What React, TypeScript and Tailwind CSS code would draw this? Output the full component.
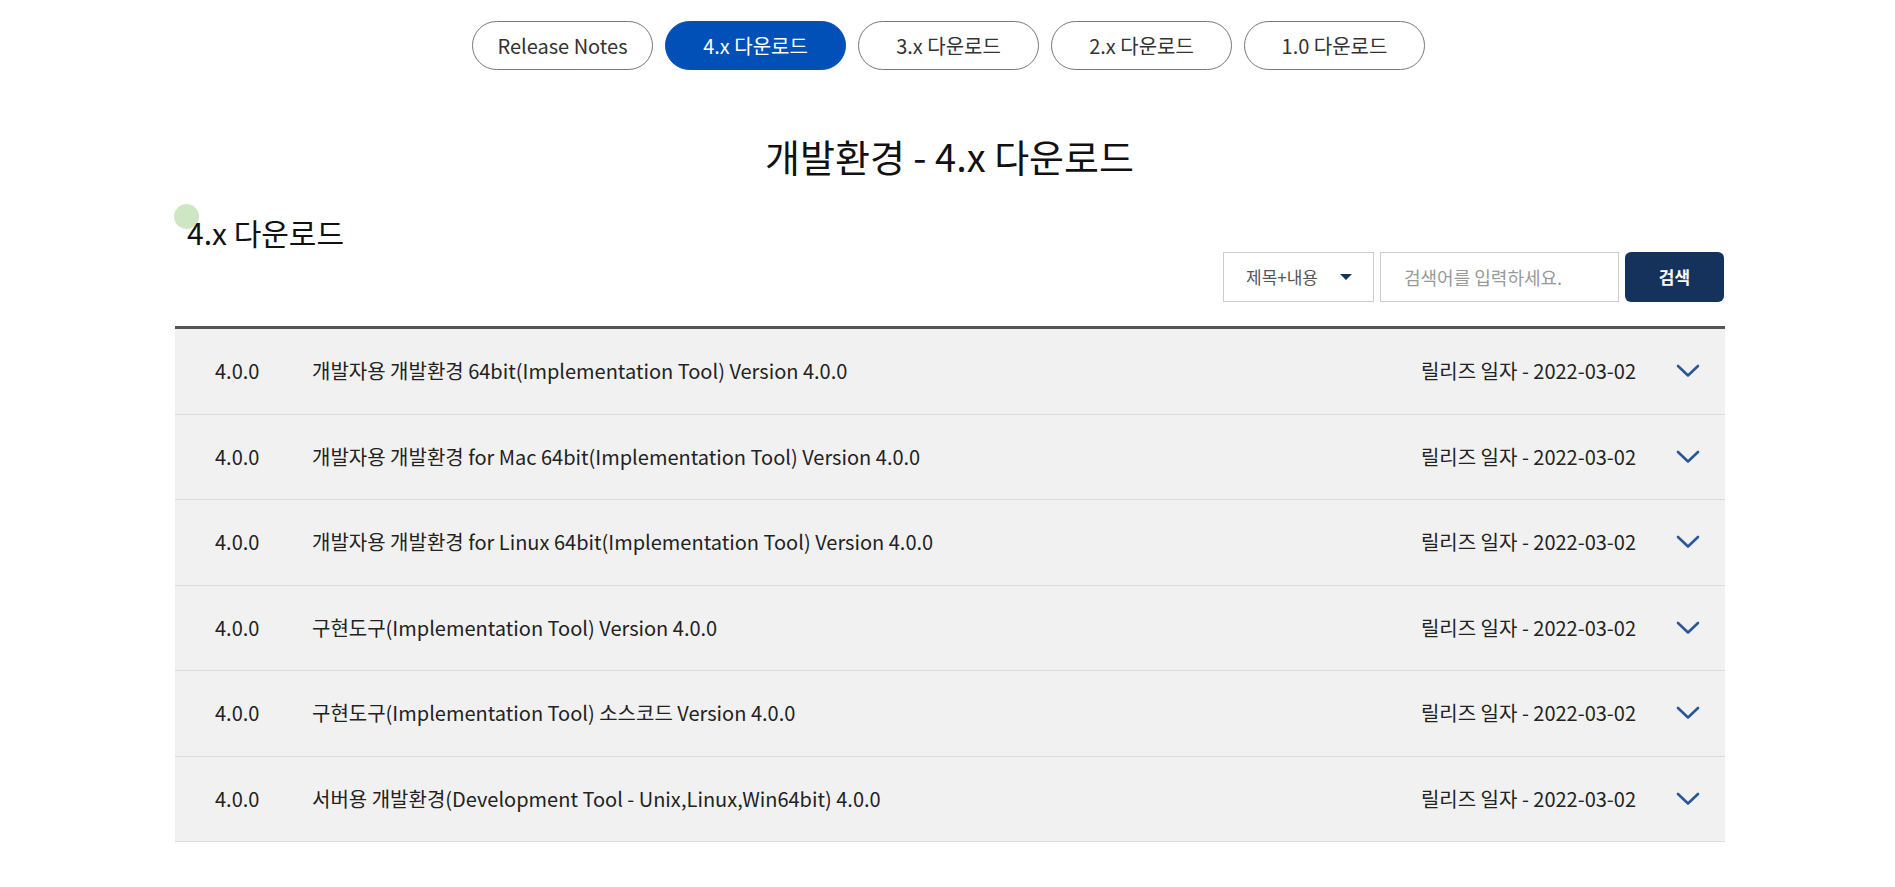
import {useState} from "react";

type Item = {
    version: string
    title: string
    date: string
}

const tabs = ["Release Notes", "4.x 다운로드", "3.x 다운로드", "2.x 다운로드", "1.0 다운로드"]

const items: Item[] = [
    {version: "4.0.0", title: "개발자용 개발환경 64bit(Implementation Tool) Version 4.0.0", date: "2022-03-02"},
    {version: "4.0.0", title: "개발자용 개발환경 for Mac 64bit(Implementation Tool) Version 4.0.0", date: "2022-03-02"},
    {version: "4.0.0", title: "개발자용 개발환경 for Linux 64bit(Implementation Tool) Version 4.0.0", date: "2022-03-02"},
    {version: "4.0.0", title: "구현도구(Implementation Tool) Version 4.0.0", date: "2022-03-02"},
    {version: "4.0.0", title: "구현도구(Implementation Tool) 소스코드 Version 4.0.0", date: "2022-03-02"},
    {version: "4.0.0", title: "서버용 개발환경(Development Tool - Unix,Linux,Win64bit) 4.0.0", date: "2022-03-02"},
]

const Chevron = () => (
    <svg width="24" height="14" viewBox="0 0 24 14" fill="none">
        <polyline points="2,2 12,11.5 22,2" stroke="#2b5797" strokeWidth="2.6" strokeLinecap="round" strokeLinejoin="round"/>
    </svg>
)

const App = () => {
    const [active, setActive] = useState(1)

    return (
        <div className="min-h-screen bg-white text-[#222] font-['Noto_Sans_CJK_KR','Noto_Sans',sans-serif]">
            {/* tabs */}
            <div className="flex justify-center gap-[12px] pt-[21px] pl-[2px]">
                {tabs.map((t, i) => (
                    <button
                        key={t}
                        onClick={() => setActive(i)}
                        className={
                            i === active
                                ? "w-[181px] h-[49px] rounded-full bg-[#0050b8] border border-[#0050b8] text-white text-[20px]"
                                : "w-[181px] h-[49px] rounded-full bg-white border border-[#777] text-[#333] text-[20px]"
                        }
                    >{t}</button>
                ))}
            </div>

            <h1 className="text-center text-[38px] leading-[48px] font-normal mt-[62px] text-[#111] pl-[4px]">개발환경 - 4.x 다운로드</h1>

            <div className="pl-[5px]">
                <div className="w-[1550px] mx-auto">
                    <div className="relative mt-[32px] h-[40px] pl-[12px]">
                        <span className="absolute left-[-1px] top-[-8px] w-[25px] h-[25px] rounded-full bg-[#cfe6c4]"></span>
                        <h2 className="relative text-[30px] leading-[40px] text-[#111]">4.x 다운로드</h2>
                    </div>

                    {/* search */}
                    <div className="flex justify-end gap-[6px] pr-[1px]">
                        <div className="w-[151px] h-[50px] border border-[#ccc] flex items-center justify-between pl-[22px] pr-[21px] text-[17px] text-[#555]">
                            <span>제목+내용</span>
                            <span className="w-0 h-0 border-l-[6px] border-r-[6px] border-t-[6px] border-l-transparent border-r-transparent border-t-[#14325c]"></span>
                        </div>
                        <input
                            className="w-[239px] h-[50px] border border-[#ccc] px-[23px] text-[18px] placeholder:text-[#999] outline-none"
                            placeholder="검색어를 입력하세요."
                        />
                        <button className="w-[99px] h-[50px] rounded-[6px] bg-[#14325c] text-white text-[17px] font-bold">검색</button>
                    </div>

                    {/* list */}
                    <ul className="mt-[24px] border-t-[3px] border-[#555]">
                        {items.map((it, i) => (
                            <li key={i} className="h-[85.5px] bg-[#f1f1f1] border-b border-[#ddd] flex items-center text-[20px] text-[#222]">
                                <span className="w-[137px] pl-[40px]">{it.version}</span>
                                <span className="flex-1">{it.title}</span>
                                <span>릴리즈 일자 - {it.date}</span>
                                <span className="ml-[40px] mr-[25px] flex items-center"><Chevron/></span>
                            </li>
                        ))}
                    </ul>
                </div>
            </div>
        </div>
    )
}

export default App
